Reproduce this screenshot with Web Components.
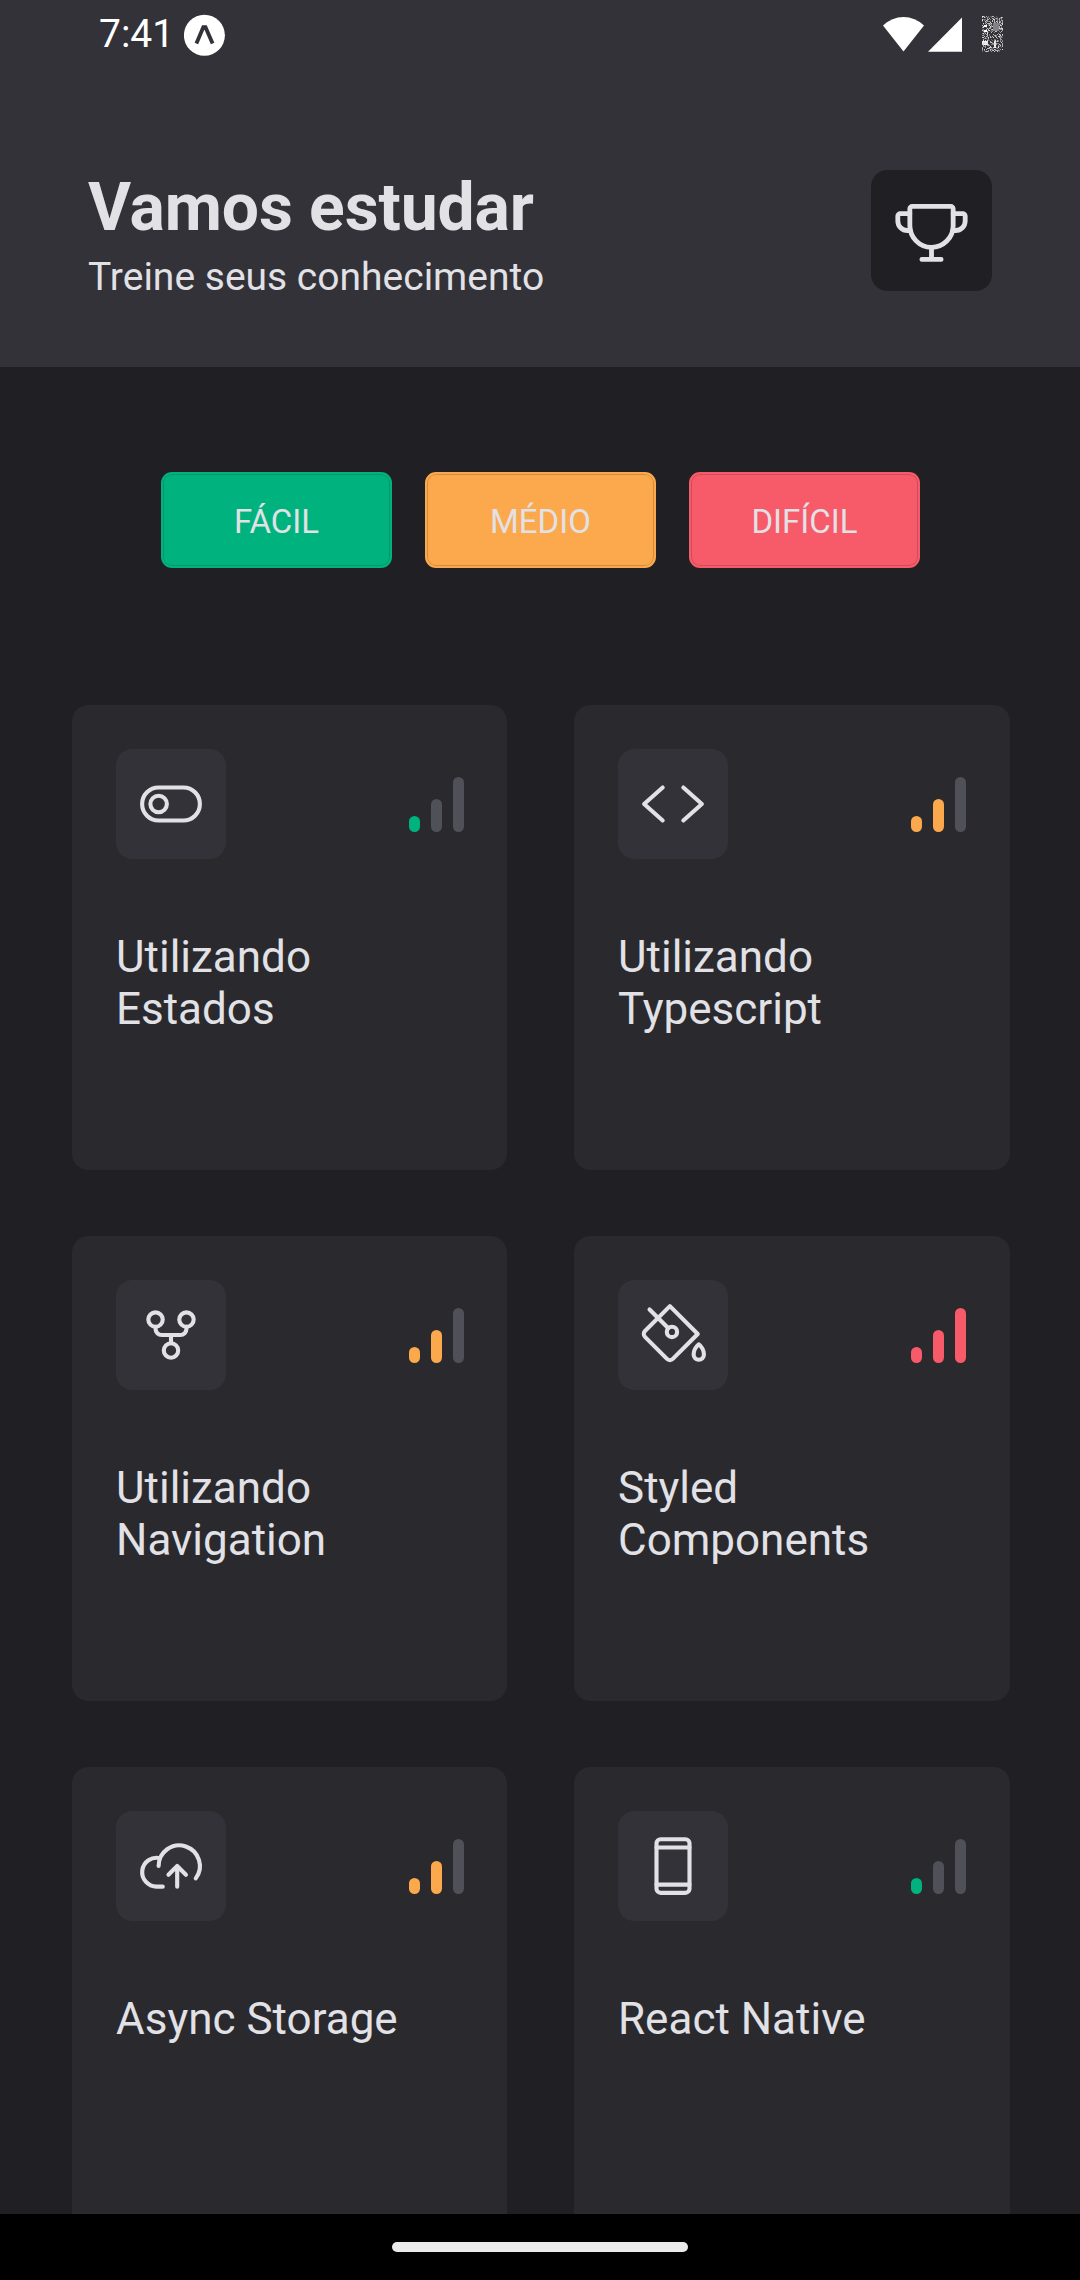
<!DOCTYPE html>
<html lang="pt-BR">
<head>
<meta charset="utf-8">
<title>Vamos estudar</title>
<style>
  html, body { margin: 0; height: 2280px; overflow: hidden; background: #202024; }
  body { font-family: Roboto, "Noto Sans", sans-serif; color: #E1E1E6; }
</style>
</head>
<body>
<study-app></study-app>
<script>
const define = (name, render, after) => customElements.define(name, class extends HTMLElement {
  constructor() { super(); this.attachShadow({ mode: 'open' }); }
  connectedCallback() {
    this.shadowRoot.innerHTML = render(this);
    if (after) after(this.shadowRoot);
  }
});

const ICONS = {
  trophy: '<path d="M56,56v55.1c0,39.7,31.8,72.6,71.5,72.9A72,72,0,0,0,200,112V56a8,8,0,0,0-8-8H64A8,8,0,0,0,56,56Z"/><path d="M96,224h64M128,184v40M198.2,128H208a32,32,0,0,0,32-32V80a8,8,0,0,0-8-8H200M57.8,128H48A32,32,0,0,1,16,96V80a8,8,0,0,1,8-8H56"/>',
  toggle: '<rect x="16" y="64" width="224" height="128" rx="64"/><circle cx="80" cy="128" r="32"/>',
  code: '<path d="M88,64L16,128L88,192M168,64L240,128L168,192"/>',
  fork: '<circle cx="128" cy="188" r="28"/><circle cx="188" cy="68" r="28"/><circle cx="68" cy="68" r="28"/><path d="M68,96v8a24,24,0,0,0,24,24h72a24,24,0,0,0,24-24V96M128,128v32"/>',
  bucket: '<path d="M116,16L224,124L127.3,220.7a16,16,0,0,1-22.6,0L19.3,135.3a16,16,0,0,1,0-22.6Z"/><circle cx="124" cy="116" r="20"/><path d="M109.9,101.9L37,29"/><path d="M248,204a20,20,0,0,1-40,0c0-23,20-40,20-40S248,181,248,204Z"/>',
  cloud: '<path d="M118.1,161.9L152,128l33.9,33.9M152,208V128M96,208H72A56,56,0,1,1,85.9,97.7M80,128a80,80,0,1,1,144,48"/>',
  mobile: '<rect x="64" y="24" width="128" height="208" rx="16"/><path d="M64,56H192M64,200H192"/>'
};

define('line-icon', el => `
  <style>
    :host { display: block; width: 66px; height: 66px; }
    svg { display: block; width: 100%; height: 100%; overflow: visible; fill: none; stroke: #E1E1E6; stroke-width: 16; stroke-linecap: round; stroke-linejoin: round; }
  </style>
  <svg viewBox="0 0 256 256">${ICONS[el.getAttribute('name')]}</svg>`);

/* Speckled battery glyph, cell by cell. */
function batteryCells() {
  let seed = 41, out = '';
  const next = () => (seed = (seed * 1103515245 + 12345) % 2147483648) / 2147483648;
  for (let y = 0; y < 36; y++) for (let x = 0; x < 21; x++) {
    const v = next(), w = next();
    if (v < 0.5) out += `<rect x="${x}" y="${y}" width="1" height="1" fill="#fff" opacity="${(0.2 + w * 0.65).toFixed(2)}"/>`;
  }
  return out + '<rect x="11" y="7" width="6" height="8" fill="#828286"/><rect x="0" y="25" width="6" height="4" fill="#fff" opacity=".85"/><rect x="2" y="9" width="3" height="2" fill="#fff"/><rect x="2" y="14" width="3" height="2" fill="#fff"/><rect x="12" y="25" width="2" height="7" fill="#fff" opacity=".85"/>';
}

define('status-bar', () => `
  <style>
    :host { display: flex; justify-content: space-between; height: 66px; padding: 0 77px 0 99px; color: #fff; }
    .side { display: flex; }
    time { font-size: 39px; line-height: 46px; padding-top: 11px; width: 85px; }
    svg { display: block; }
  </style>
  <div class="side"><time>7:41</time>
    <svg width="42" height="66" viewBox="184 0 42 66"><circle cx="204.4" cy="35.3" r="20.5" fill="#fff"/><path d="M196.4,43.6L203.3,27.2H205.5L212.6,43.6" fill="none" stroke="#323238" stroke-width="3.8"/></svg>
  </div>
  <div class="side">
    <svg width="120" height="66" viewBox="883 0 120 66"><path d="M883,25.5Q892,17 903.5,17T924,25.5L903.5,51.5Z" fill="#fff"/><path d="M928,51.7H962V17.5Z" fill="#fff"/><g transform="translate(982 16)" shape-rendering="crispEdges">${batteryCells()}</g></svg>
  </div>`);

define('home-header', () => `
  <style>
    :host { display: block; height: 367px; background: #323238; }
    .row { display: flex; justify-content: space-between; padding: 104px 88px 0; }
    .text { margin-top: -1px; }
    h1 { margin: 0; font-size: 66px; line-height: 78px; font-weight: 700; letter-spacing: -0.1px; }
    p { margin: 7px 0 0; font-size: 39px; line-height: 46px; }
    .trophy { display: flex; align-items: center; justify-content: center; width: 121px; height: 121px; border-radius: 16.5px; background: #202024; }
    line-icon { width: 77px; height: 77px; }
  </style>
  <status-bar></status-bar>
  <div class="row"><div class="text"><h1>Vamos estudar</h1><p>Treine seus conhecimento</p></div>
  <div class="trophy"><line-icon name="trophy"></line-icon></div></div>`);

define('level-filter', el => `
  <style>
    :host { display: flex; box-sizing: border-box; width: 231px; height: 96px; border: 2px solid ${el.getAttribute('color')}; border-radius: 11px; background: ${el.getAttribute('color')}; box-shadow: inset 0 0 0 1px rgba(32,32,36,.2); align-items: center; justify-content: center; font-size: 33px; line-height: 40px; }
    span { padding-top: 4px; }
  </style>
  <span><slot></slot></span>`);

define('level-bars', el => {
  const level = +el.getAttribute('level');
  const color = ['', '#00B37E', '#FBA94C', '#F75A68'][level];
  return `
  <style>
    :host { display: flex; align-items: flex-end; gap: 11px; height: 55px; }
    i { display: block; width: 11px; border-radius: 5.5px; background: #505059; }
    i.on { background: ${color}; }
  </style>
  ${[16, 33, 55].map((h, n) => `<i class="${n < level ? 'on' : ''}" style="height:${h}px"></i>`).join('')}`;
});

define('quiz-card', el => `
  <style>
    :host { display: block; box-sizing: border-box; height: 465px; padding: 44px 43px 0 44px; border-radius: 16.5px; background: #29292E; }
    :host(:nth-child(even)) { padding-right: 44px; }
    .top { display: flex; justify-content: space-between; align-items: center; height: 110px; }
    .box { display: flex; align-items: center; justify-content: center; width: 110px; height: 110px; border-radius: 16.5px; background: #323238; }
    .title { margin-top: 72px; width: 290px; font-size: 44px; line-height: 52px; }
  </style>
  <div class="top"><div class="box"><line-icon name="${el.getAttribute('icon')}"></line-icon></div><level-bars level="${el.getAttribute('level')}"></level-bars></div>
  <div class="title"><slot></slot></div>`);

define('gesture-bar', () => `
  <style>
    :host { display: flex; flex: none; height: 66px; box-sizing: border-box; padding-top: 28px; justify-content: center; background: #000; }
    div { width: 296px; height: 10px; border-radius: 5px; background: #EBEBEB; }
  </style><div></div>`);

define('study-app', () => `
  <style>
    :host { display: flex; flex-direction: column; width: 1080px; height: 2280px; overflow: hidden; background: #202024; }
    home-header { flex: none; }
    main { flex: 1; min-height: 0; overflow: hidden; }
    .filters { display: flex; justify-content: center; gap: 33px; padding: 105px 0 137px 1px; }
    .grid { display: grid; grid-template-columns: 435px 436px; gap: 66px 67px; padding: 0 70px 0 72px; }
  </style>
  <home-header></home-header>
  <main>
    <div class="filters">
      <level-filter color="#00B37E">FÁCIL</level-filter>
      <level-filter color="#FBA94C">MÉDIO</level-filter>
      <level-filter color="#F75A68">DIFÍCIL</level-filter>
    </div>
    <div class="grid">
      <quiz-card icon="toggle" level="1">Utilizando Estados</quiz-card>
      <quiz-card icon="code" level="2">Utilizando Typescript</quiz-card>
      <quiz-card icon="fork" level="2">Utilizando Navigation</quiz-card>
      <quiz-card icon="bucket" level="3">Styled Components</quiz-card>
      <quiz-card icon="cloud" level="2">Async Storage</quiz-card>
      <quiz-card icon="mobile" level="1">React Native</quiz-card>
    </div>
  </main>
  <gesture-bar></gesture-bar>`);
</script>
</body>
</html>
